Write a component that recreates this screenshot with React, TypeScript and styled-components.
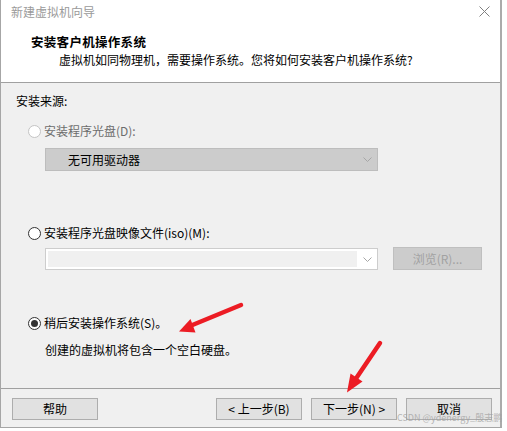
import React from "react";
import styled, { createGlobalStyle } from "styled-components";

const GlobalStyle = createGlobalStyle`
  html, body { margin: 0; padding: 0; background: #ffffff; }
  body {
    font-family: "Noto Sans CJK SC", "Microsoft YaHei", "Noto Sans", sans-serif;
    font-size: 12px;
    color: #000;
  }
  * { box-sizing: border-box; }
`;

const Window = styled.div`
  position: relative;
  width: 502px;
  height: 428px;
  border-left: 1px solid #a6a6a6;
  border-right: 2px solid #ababab;
  border-bottom: 1px solid #a6a6a6;
  background: #f0f0f0;
  display: flex;
  flex-direction: column;
`;

const Header = styled.div`
  height: 83px;
  background: #ffffff;
  border-bottom: 1px solid #a0a0a0;
  display: flex;
  flex-direction: column;
`;

const TitleBar = styled.div`
  height: 24px;
  display: flex;
  justify-content: space-between;
  align-items: flex-start;
  padding: 4px 10px 0 10px;
`;

const TitleText = styled.span`
  line-height: 16px;
  color: #9a9a9a;
`;

const CloseIcon = styled.svg`
  margin-top: 2px;
  display: block;
`;

const Heading = styled.div`
  margin: 10px 0 0 30px;
  line-height: 16px;
  font-weight: 700;
  font-size: 12.5px;
  letter-spacing: 0.3px;
`;

const SubHeading = styled.div`
  margin: 2px 0 0 58px;
  line-height: 16px;
`;

const Body = styled.div`
  flex: 1;
  display: flex;
  flex-direction: column;
  padding: 10px 0 0 15px;
`;

const Label = styled.div`
  line-height: 16px;
`;

const RadioRow = styled.label<{ $top: number; $disabled?: boolean }>`
  margin: ${(p) => p.$top}px 0 0 12px;
  display: flex;
  align-items: center;
  gap: 3px;
  height: 16px;
  line-height: 16px;
  color: ${(p) => (p.$disabled ? "#6d6d6d" : "#000")};
`;

const RadioCircle = styled.span<{ $disabled?: boolean; $checked?: boolean }>`
  width: 13px;
  height: 13px;
  border-radius: 50%;
  border: 1px solid ${(p) => (p.$disabled ? "#c4c4c4" : "#333333")};
  background: #ffffff;
  display: flex;
  align-items: center;
  justify-content: center;
  &::after {
    content: "";
    display: ${(p) => (p.$checked ? "block" : "none")};
    width: 7px;
    height: 7px;
    border-radius: 50%;
    background: #333333;
  }
`;

const DriveSelect = styled.div`
  margin: 9px 0 0 29px;
  width: 333px;
  height: 23px;
  background: #cccccc;
  border: 1px solid #bdbdbd;
  display: flex;
  align-items: center;
`;

const DriveText = styled.span`
  flex: 1;
  padding-left: 22px;
  line-height: 16px;
  color: #000;
`;

const ChevronBox = styled.span`
  width: 20px;
  display: flex;
  justify-content: center;
  align-items: center;
`;

const FileRow = styled.div`
  margin: 6px 0 0 29px;
  display: flex;
  align-items: flex-start;
  gap: 15px;
`;

const FileCombo = styled.div`
  margin-top: 1px;
  width: 333px;
  height: 22px;
  background: #ffffff;
  border: 1px solid #cdcdcd;
  display: flex;
  align-items: stretch;
  padding: 2px 0 2px 2px;
`;

const FileField = styled.span`
  flex: 1;
  background: #f0f0f0;
`;

const BrowseButton = styled.button`
  width: 89px;
  height: 23px;
  background: #cccccc;
  border: 1px solid #bfbfbf;
  color: #a2a2a2;
  font: inherit;
  font-size: 12px;
  padding: 0;
  line-height: 16px;
`;

const Description = styled.div`
  margin: 11px 0 0 29px;
  line-height: 16px;
`;

const Footer = styled.div`
  height: 39px;
  border-top: 1px solid #a0a0a0;
  display: flex;
  align-items: flex-start;
  padding: 9px 8px 0 11px;
`;

const ButtonGroup = styled.div`
  margin-left: auto;
  display: flex;
  gap: 9px;
`;

const DialogButton = styled.button`
  width: 86px;
  height: 22px;
  background: #e1e1e1;
  border: 1px solid #adadad;
  font: inherit;
  font-size: 12px;
  color: #000;
  padding: 0;
  line-height: 16px;
`;

const Annotations = styled.svg`
  position: absolute;
  left: -1px;
  top: 0;
  pointer-events: none;
`;

const Watermark = styled.span`
  position: absolute;
  left: 396px;
  top: 412px;
  font-size: 9px;
  line-height: 12px;
  color: rgba(160, 160, 160, 0.75);
  white-space: nowrap;
  pointer-events: none;
`;

const Chevron = () => (
  <svg width="9" height="5" viewBox="0 0 9 5">
    <polyline points="0.5,0.5 4.5,4.5 8.5,0.5" fill="none" stroke="#a6a6a6" strokeWidth="1" />
  </svg>
);

export default function App() {
  return (
    <>
      <GlobalStyle />
      <Window>
        <Header>
          <TitleBar>
            <TitleText>新建虚拟机向导</TitleText>
            <CloseIcon width="11" height="11" viewBox="0 0 11 11">
              <line x1="0.5" y1="0.5" x2="10.5" y2="10.5" stroke="#808080" strokeWidth="1" />
              <line x1="10.5" y1="0.5" x2="0.5" y2="10.5" stroke="#808080" strokeWidth="1" />
            </CloseIcon>
          </TitleBar>
          <Heading>安装客户机操作系统</Heading>
          <SubHeading>虚拟机如同物理机，需要操作系统。您将如何安装客户机操作系统?</SubHeading>
        </Header>

        <Body>
          <Label>安装来源:</Label>

          <RadioRow $top={14} $disabled>
            <RadioCircle $disabled />
            安装程序光盘(D):
          </RadioRow>
          <DriveSelect>
            <DriveText>无可用驱动器</DriveText>
            <ChevronBox>
              <Chevron />
            </ChevronBox>
          </DriveSelect>

          <RadioRow $top={54}>
            <RadioCircle />
            安装程序光盘映像文件(iso)(M):
          </RadioRow>
          <FileRow>
            <FileCombo>
              <FileField />
              <ChevronBox>
                <Chevron />
              </ChevronBox>
            </FileCombo>
            <BrowseButton disabled>浏览(R)...</BrowseButton>
          </FileRow>

          <RadioRow $top={45}>
            <RadioCircle $checked />
            稍后安装操作系统(S)。
          </RadioRow>
          <Description>创建的虚拟机将包含一个空白硬盘。</Description>
        </Body>

        <Footer>
          <DialogButton>帮助</DialogButton>
          <ButtonGroup>
            <DialogButton>&lt; 上一步(B)</DialogButton>
            <DialogButton>下一步(N) &gt;</DialogButton>
            <DialogButton>取消</DialogButton>
          </ButtonGroup>
        </Footer>

        <Watermark>CSDN @ydenergy_殷志鹏</Watermark>

        <Annotations width="502" height="428" viewBox="0 0 502 428">
          <line x1="241" y1="305" x2="190" y2="326" stroke="#ec1c24" strokeWidth="4.5" strokeLinecap="round" />
          <polygon points="179,331.5 190.5,319 195.5,332.5" fill="#ec1c24" />
          <line x1="380" y1="343" x2="355" y2="380" stroke="#ec1c24" strokeWidth="4.5" strokeLinecap="round" />
          <polygon points="347,392.5 350.5,373.5 362.5,381.5" fill="#ec1c24" />
        </Annotations>
      </Window>
    </>
  );
}
